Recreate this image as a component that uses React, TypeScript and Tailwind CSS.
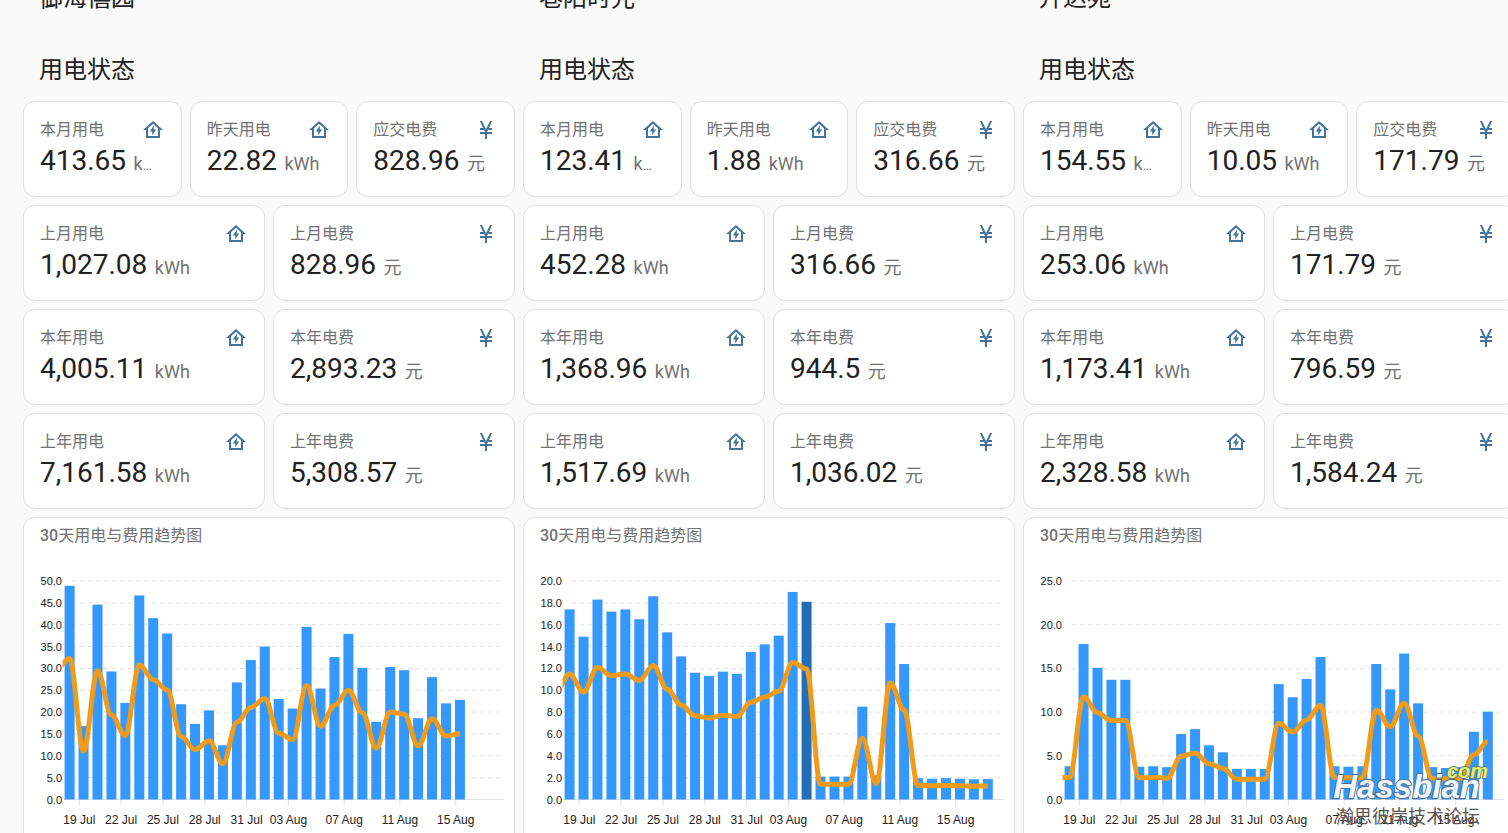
import React from 'react';

type Home = {
  name: string;
  month: string;
  yesterday: string;
  due: string;
  lastMonth: [string, string];
  thisYear: [string, string];
  lastYear: [string, string];
  max: number;
  step: number;
  before: number;
  active?: number;
  usage: number[];
};

// yuan per kWh
const PRICE = 0.66;

const homes: Home[] = [
  {
    name: '御海僖园',
    month: '413.65',
    yesterday: '22.82',
    due: '828.96',
    lastMonth: ['1,027.08', '828.96'],
    thisYear: ['4,005.11', '2,893.23'],
    lastYear: ['7,161.58', '5,308.57'],
    max: 50,
    step: 5,
    before: 45,
    usage: [
      48.9, 16.8, 44.6, 29.3, 22.1, 46.7, 41.5, 38, 21.8, 17.3, 20.4, 12.4, 26.8, 31.9, 35, 23, 20.8,
      39.5, 25.4, 32.6, 37.9, 30.1, 17.8, 30.3, 29.6, 18.6, 28, 22, 22.8,
    ],
  },
  {
    name: '巷陌时光',
    month: '123.41',
    yesterday: '1.88',
    due: '316.66',
    lastMonth: ['452.28', '316.66'],
    thisYear: ['1,368.96', '944.5'],
    lastYear: ['1,517.69', '1,036.02'],
    max: 20,
    step: 2,
    before: 14.8,
    active: 17,
    usage: [
      17.4, 14.9, 18.3, 17.2, 17.4, 16.5, 18.6, 15.3, 13.1, 11.6, 11.3, 11.7, 11.5, 13.5, 14.2, 15, 19,
      18.1, 2.1, 2.1, 2.1, 8.5, 2.2, 16.15, 12.4, 1.95, 1.9, 1.95, 1.9, 1.85, 1.88,
    ],
  },
  {
    name: '升达苑',
    month: '154.55',
    yesterday: '10.05',
    due: '171.79',
    lastMonth: ['253.06', '171.79'],
    thisYear: ['1,173.41', '796.59'],
    lastYear: ['2,328.58', '1,584.24'],
    max: 25,
    step: 5,
    before: 3.8,
    usage: [
      3.8, 17.8, 15.05, 13.7, 13.7, 3.75, 3.8, 3.7, 7.5, 8.05, 6.2, 5.4, 3.5, 3.5, 3.5, 13.2, 11.7,
      13.8, 16.3, 3.8, 3.75, 3.8, 15.5, 12.6, 16.7, 11, 3.7, 3.6, 3.7, 7.75, 10.05,
    ],
  },
];

const dayTicks: [number, string][] = [
  [0, '19 Jul'],
  [3, '22 Jul'],
  [6, '25 Jul'],
  [9, '28 Jul'],
  [12, '31 Jul'],
  [15, '03 Aug'],
  [19, '07 Aug'],
  [23, '11 Aug'],
  [27, '15 Aug'],
];

const HomeBoltIcon = () => (
  <svg viewBox="0 0 24 24" className="size-6 shrink-0 fill-[#44739e]" aria-hidden="true">
    <path d="M12 3L2 12H5V20H19V12H22L12 3M12 5.69L17 10.19V18H7V10.19L12 5.69M11.2 17.3V13.4H8.8L12.8 7.6V11.5H15.2L11.2 17.3Z" />
  </svg>
);

const YuanIcon = () => (
  <svg viewBox="0 0 24 24" className="size-6 shrink-0 fill-[#44739e]" aria-hidden="true">
    <path d="M11 21V16H6V14H11V13.71L10.16 12H6V10H9.19L5.77 3H8L12 11.18L16 3H18.23L14.82 10H18V12H13.84L13 13.71V14H18V16H13V21H11Z" />
  </svg>
);

const StatCard: React.FC<{ label: string; value: string; unit: 'kWh' | '元' }> = ({ label, value, unit }) => (
  <div className="h-24 min-w-0 rounded-xl border border-[#e0e0e0] bg-white px-4 pt-2">
    <div className="flex h-10 items-center justify-between">
      <span className="truncate text-base text-[#727272]">{label}</span>
      {unit === 'kWh' ? <HomeBoltIcon /> : <YuanIcon />}
    </div>
    <div className="-mt-[3px] truncate text-sm leading-7 text-[#727272]">
      <span className="mr-1 text-[28px] leading-7 text-[#212121]">{value}</span>{' '}
      <span className="text-lg leading-7">{unit}</span>
    </div>
  </div>
);

const STEP = 13.94;
const FIRST = 45.6;
const BASE = 245.5;
const PLOT = 218.5;

const TrendChart: React.FC<{ home: Home; id: string }> = ({ home, id }) => {
  const y = (v: number) => BASE - (v / home.max) * PLOT;
  const levels = Array.from({ length: home.max / home.step + 1 }, (_, i) => i * home.step);
  const points = [home.before, ...home.usage].map((v, i) => [FIRST + (i - 1) * STEP, y(v * PRICE)]);
  const bend = STEP * 0.35;
  const line = points
    .map(([px, py], i) => {
      if (i === 0) return `M${px} ${py}`;
      const [ox, oy] = points[i - 1];
      return `C${ox + bend} ${oy} ${px - bend} ${py} ${px} ${py}`;
    })
    .join('');

  return (
    <svg viewBox="0 0 490 296" className="block w-full font-['Liberation_Sans',Arial,sans-serif]">
      <clipPath id={id}>
        <rect x="38.5" y="0" width="442" height="260" />
      </clipPath>
      {levels.map((v) => (
        <g key={v}>
          {v > 0 && (
            <line x1="48" x2="479" y1={y(v)} y2={y(v)} stroke="#e0e0e0" strokeDasharray="4" />
          )}
          <text x="38" y={y(v) + 4} textAnchor="end" className="fill-[#212121] text-[11px]">
            {v.toFixed(1)}
          </text>
        </g>
      ))}
      <line x1="40" x2="480" y1={BASE} y2={BASE} stroke="#e0e0e0" />
      {dayTicks.map(([day, label]) => {
        const x = FIRST + 9.7 + day * STEP;
        return (
          <g key={label}>
            <line x1={x} x2={x} y1={BASE} y2={BASE + 6} stroke="#e0e0e0" />
            <text x={x} y="270" textAnchor="middle" className="fill-[#212121] text-xs">
              {label}
            </text>
          </g>
        );
      })}
      {home.usage.map((v, i) => (
        <rect
          key={i}
          x={FIRST + i * STEP - 5}
          y={y(v)}
          width="10"
          height={BASE - y(v)}
          fill={i === home.active ? '#246eb6' : '#3498fd'}
        />
      ))}
      <path d={line} fill="none" stroke="#f09c1a" strokeWidth="5" clipPath={`url(#${id})`} />
    </svg>
  );
};

const HomeColumn: React.FC<{ home: Home; id: string }> = ({ home, id }) => (
  <section className="min-w-0">
    <h1 className="flex h-12 items-center px-4 text-2xl text-[#212121]">{home.name}</h1>
    <h2 className="mt-6 mb-[7px] flex h-12 items-center px-4 text-2xl text-[#212121]">用电状态</h2>
    <div className="flex flex-col gap-2">
      <div className="grid grid-cols-3 gap-2">
        <StatCard label="本月用电" value={home.month} unit="kWh" />
        <StatCard label="昨天用电" value={home.yesterday} unit="kWh" />
        <StatCard label="应交电费" value={home.due} unit="元" />
      </div>
      <div className="grid grid-cols-2 gap-2">
        <StatCard label="上月用电" value={home.lastMonth[0]} unit="kWh" />
        <StatCard label="上月电费" value={home.lastMonth[1]} unit="元" />
        <StatCard label="本年用电" value={home.thisYear[0]} unit="kWh" />
        <StatCard label="本年电费" value={home.thisYear[1]} unit="元" />
        <StatCard label="上年用电" value={home.lastYear[0]} unit="kWh" />
        <StatCard label="上年电费" value={home.lastYear[1]} unit="元" />
      </div>
      <div className="rounded-xl border border-[#e0e0e0] bg-white">
        <h3 className="flex h-9 items-center px-4 text-base text-[#727272]">
          <span className="font-medium">30</span>天用电与费用趋势图
        </h3>
        <TrendChart home={home} id={id} />
      </div>
    </div>
  </section>
);

const Watermark = () => (
  <div className="absolute right-7 bottom-1 flex flex-col items-end">
    <span className="z-10 -mr-2 -mb-3 font-['Liberation_Sans',Arial,sans-serif] text-xl leading-5 font-bold text-[#e8ef62] italic [-webkit-text-stroke:2px_#5c7f8e] [paint-order:stroke]">
      com
    </span>
    <span className="font-['Liberation_Sans',Arial,sans-serif] text-[33px] leading-9 font-bold text-[#f0f8ff] italic [-webkit-text-stroke:2px_#54708c] [paint-order:stroke]">
      Hassbian
    </span>
    <span className="text-lg leading-6 text-[#555]">瀚思彼岸技术论坛</span>
  </div>
);

const App: React.FC = () => (
  <div className="relative h-screen overflow-hidden bg-[#fafafa] font-['Roboto','Noto_Sans_CJK_SC',sans-serif]">
    <main className="-mt-[26px] -mr-[7px] ml-[23px] grid grid-cols-3 gap-2">
      {homes.map((home, i) => (
        <HomeColumn key={home.name} home={home} id={`plot-${i}`} />
      ))}
    </main>
    <Watermark />
  </div>
);

export default App;
